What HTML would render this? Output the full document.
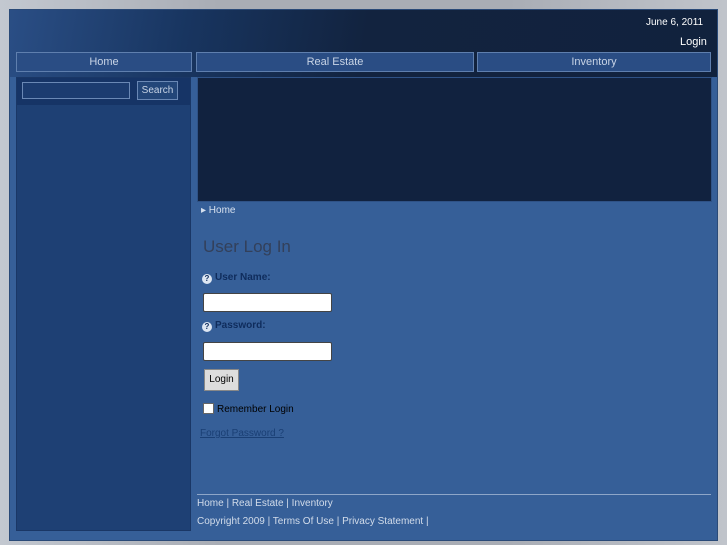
<!DOCTYPE html>
<html><head><style>
*{margin:0;padding:0;box-sizing:border-box}
body{width:727px;height:545px;background:linear-gradient(90deg,#c3c8d0,#a9adb5 30%,#a9adb5 70%,#c0c4cb);font-family:"Liberation Sans",sans-serif;position:relative;overflow:hidden}
#c{position:absolute;left:9px;top:9px;width:709px;height:532px;background:#365f98;border:1px solid #2a4a78}
#hd{position:absolute;left:0;top:0;width:707px;height:67px;background:linear-gradient(100deg,#2a4e85 0%,#183560 25%,#12233f 50%,#11223d 100%)}
.a{position:absolute;color:#fff;font-size:11px}
.nav{position:absolute;top:42px;height:20px;background:#2a4d84;border:1px solid #5f7fae;color:#c8d4e6;font-size:11px;text-align:center;line-height:18px}
#sb{position:absolute;left:6px;top:67px;width:175px;height:454px;background:#1e4074;border:1px solid #1a3766}
#ss{position:absolute;left:0;top:0;width:173px;height:27px;background:#163466}
#bn{position:absolute;left:187px;top:67px;width:515px;height:125px;background:#11223f;border:1px solid #2f5286}
.in{position:absolute;background:#fff;border:1px solid #444;border-radius:2px}
.lbl{position:absolute;color:#0f2c5c;font-size:10px;font-weight:bold}
.q{display:inline-block;width:10px;height:10px;border-radius:50%;background:#dde6f2;color:#0f2c5c;font-size:8px;text-align:center;line-height:10px;margin-right:3px;vertical-align:-1px}
.ft{position:absolute;color:#d2dcea;font-size:10px}
</style></head><body>
<div id="c">
<div id="hd"></div>
<div class="a" style="left:636px;top:7px;font-size:10px">June 6, 2011</div>
<div class="a" style="left:670px;top:26px">Login</div>
<div class="nav" style="left:6px;width:176px">Home</div>
<div class="nav" style="left:186px;width:278px">Real Estate</div>
<div class="nav" style="left:467px;width:234px">Inventory</div>
<div id="sb"><div id="ss">
<div style="position:absolute;left:5px;top:4px;width:108px;height:17px;border:1px solid #6a88b5;background:#1c3c70"></div>
<div style="position:absolute;left:120px;top:3px;width:41px;height:19px;border:1px solid #6a88b5;background:#234679;color:#c8d4e6;font-size:10px;text-align:center;line-height:17px">Search</div>
</div></div>
<div id="bn"></div>
<div class="a" style="left:191px;top:195px;font-size:10px;color:#d6e0ee">&#9656; Home</div>
<div style="position:absolute;left:193px;top:227px;font-size:17px;font-weight:normal;color:#33405a">User Log In</div>
<div class="lbl" style="left:192px;top:262px"><span class="q">?</span>User Name:</div>
<div class="in" style="left:193px;top:283px;width:129px;height:19px"></div>
<div class="lbl" style="left:192px;top:310px"><span class="q">?</span>Password:</div>
<div class="in" style="left:193px;top:332px;width:129px;height:19px"></div>
<div style="position:absolute;left:194px;top:359px;width:35px;height:22px;background:#ddd;border:1px solid #888;font-size:10px;text-align:center;line-height:20px;color:#000">Login</div>
<div style="position:absolute;left:193px;top:393px;width:11px;height:11px;background:#fff;border:1px solid #666"></div>
<div style="position:absolute;left:207px;top:394px;font-size:10px;color:#000">Remember Login</div>
<div style="position:absolute;left:190px;top:418px;font-size:10px;color:#1a3f74;text-decoration:underline">Forgot Password ?</div>
<div style="position:absolute;left:187px;top:484px;width:514px;height:1px;background:#8ea6c8"></div>
<div class="ft" style="left:187px;top:488px">Home | Real Estate | Inventory</div>
<div class="ft" style="left:187px;top:506px">Copyright 2009 | Terms Of Use | Privacy Statement |</div>
</div>
</body></html>
